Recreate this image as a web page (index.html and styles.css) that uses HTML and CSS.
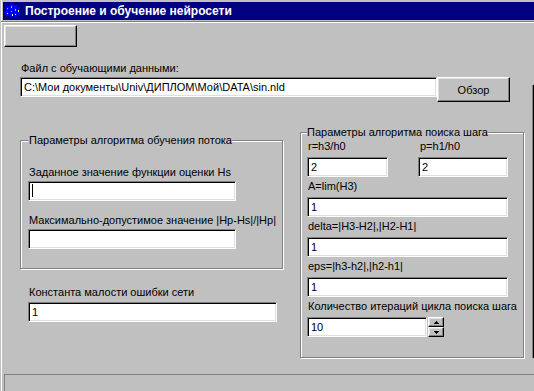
FILE: index.html
```html
<!DOCTYPE html>
<html lang="ru">
<head>
  <meta charset="UTF-8">
  <title>Построение и обучение нейросети</title>
  <link rel="stylesheet" href="styles.css">
</head>
<body>

  <div class="window">
    <div class="titlebar">
      <svg class="app-icon" width="16" height="16" viewBox="0 0 16 16">
        <rect x="1" y="3" width="3" height="10" fill="#0000ff"/>
        <rect x="5" y="1" width="3" height="13" fill="#0000ff"/>
        <rect x="9" y="2" width="3" height="12" fill="#0000ff"/>
        <rect x="13" y="4" width="2" height="8" fill="#0000ff"/>
        <rect x="2" y="5" width="1" height="1" fill="#00ffff"/>
        <rect x="6" y="3" width="1" height="2" fill="#00ffff"/>
        <rect x="10" y="6" width="1" height="2" fill="#00ffff"/>
        <rect x="6" y="8" width="1" height="1" fill="#00ffff"/>
        <rect x="2" y="10" width="1" height="1" fill="#ffff00"/>
        <rect x="10" y="11" width="1" height="1" fill="#ffff00"/>
        <rect x="13" y="7" width="1" height="2" fill="#ffff00"/>
        <rect x="7" y="11" width="1" height="2" fill="#ffffff"/>
      </svg>
      <span class="title">Построение и обучение нейросети</span>
    </div>
    <div class="menu-line"></div>

    <div class="toolbar">
      <button class="btn tool-btn"></button>
    </div>

    <div class="main">
      <div class="form">
        <div class="label file-label">Файл с обучающими данными:</div>
        <div class="file-row">
          <div class="edit file-edit">C:\Мои документы\Univ\ДИПЛОМ\Мой\DATA\sin.nld</div>
          <button class="btn browse-btn">Обзор</button>
        </div>

        <div class="columns">
          <div class="left-col">
            <fieldset class="group group-left">
              <legend>Параметры алгоритма обучения потока</legend>
              <div class="field field-hs">
                <div class="label">Заданное значение функции оценки Hs</div>
                <div class="edit edit-left"><span class="caret"></span></div>
              </div>
              <div class="field field-max">
                <div class="label">Максимально-допустимое значение |Hp-Hs|/|Hp|</div>
                <div class="edit edit-left"></div>
              </div>
            </fieldset>

            <div class="field field-const">
              <div class="label">Константа малости ошибки сети</div>
              <div class="edit edit-const">1</div>
            </div>
          </div>

          <fieldset class="group group-right">
            <legend>Параметры алгоритма поиска шага</legend>
            <div class="field pair">
              <div class="pair-col first">
                <div class="label">r=h3/h0</div>
                <div class="edit edit-r">2</div>
              </div>
              <div class="pair-col second">
                <div class="label">p=h1/h0</div>
                <div class="edit edit-p">2</div>
              </div>
            </div>
            <div class="field">
              <div class="label">A=lim(H3)</div>
              <div class="edit edit-right">1</div>
            </div>
            <div class="field">
              <div class="label">delta=|H3-H2|,|H2-H1|</div>
              <div class="edit edit-right">1</div>
            </div>
            <div class="field">
              <div class="label">eps=|h3-h2|,|h2-h1|</div>
              <div class="edit edit-right">1</div>
            </div>
            <div class="field last">
              <div class="label">Количество итераций цикла поиска шага</div>
              <div class="spin-row">
                <div class="edit edit-spin">10</div>
                <div class="spin">
                  <button class="btn spin-btn">
                    <svg width="5" height="3" viewBox="0 0 5 3"><path d="M2 0h1v1h1v1h1v1H0V2h1V1h1z" fill="#000"/></svg>
                  </button>
                  <button class="btn spin-btn">
                    <svg width="5" height="3" viewBox="0 0 5 3"><path d="M0 0h5v1H4v1H3v1H2V2H1V1H0z" fill="#000"/></svg>
                  </button>
                </div>
              </div>
            </div>
          </fieldset>
        </div>
      </div>

      <div class="side"></div>
    </div>

    <div class="statusbar"></div>
  </div>

</body>
</html>
```

FILE: styles.css
```css
* {
  box-sizing: border-box;
  font-family: "Liberation Sans", Arial, sans-serif;
  font-size: 11px;
}

body {
  margin: 0;
  padding: 0;
  overflow: hidden;
  background: #c0c0c0;
}

.window {
  width: 534px;
  height: 391px;
  display: flex;
  flex-direction: column;
  background: #c0c0c0;
  border-left: 1px solid #c0c0c0;
  box-shadow: inset 1px 0 #fff;
  color: #000;
}

.titlebar {
  height: 18px;
  margin: 2px 0 0 2px;
  padding-left: 2px;
  display: flex;
  align-items: center;
  background: #000080;
}

.app-icon {
  display: block;
  margin-right: 4px;
}

.title {
  color: #fff;
  font-weight: bold;
  font-size: 12px;
  line-height: 18px;
}

.menu-line {
  margin-top: 1px;
  border-top: 1px solid #808080;
  border-bottom: 1px solid #fff;
}

.toolbar {
  padding: 2px 0 0 3px;
  height: 24px;
}

/* raised win95 button */
.btn {
  display: block;
  margin: 0;
  padding: 0;
  background: #c0c0c0;
  border: 1px solid;
  border-color: #fff #000 #000 #fff;
  box-shadow: inset -1px -1px #808080, inset 1px 1px #dfdfdf;
  color: #000;
}

.tool-btn {
  width: 73px;
  height: 22px;
}

.main {
  display: flex;
}

.form {
  width: 504px;
  margin-left: 19px;
}

.label {
  line-height: 13px;
  padding-left: 1px;
  white-space: nowrap;
}

.file-label {
  margin-top: 15px;
  margin-bottom: 2px;
}

.file-row {
  display: flex;
  align-items: flex-start;
}

/* sunken win95 edit */
.edit {
  height: 20px;
  padding: 0 3px;
  background: #fff;
  border: 1px solid;
  border-color: #808080 #fff #fff #808080;
  box-shadow: inset 1px 1px #000, inset -1px -1px #dfdfdf;
  line-height: 18px;
  white-space: nowrap;
  overflow: hidden;
}

.file-edit {
  width: 417px;
}

.browse-btn {
  width: 73px;
  height: 25px;
}

.columns {
  display: grid;
  grid-template-columns: 263px 224px;
  column-gap: 17px;
  align-items: start;
}

.left-col {
  margin-top: 32px;
}

.group {
  margin: 0;
  min-width: 0;
  border: 1px solid #808080;
  box-shadow: 1px 1px 0 #fff, inset 1px 1px 0 #fff;
}

.group legend {
  padding: 0;
  line-height: 13px;
  background: #c0c0c0;
}

.group-left {
  padding: 0 0 19px 7px;
}

.group-left legend {
  padding-left: 1px;
}

.group-left .label {
  margin-bottom: 2px;
}

.field-hs {
  margin-top: 19px;
}

.field-max {
  margin-top: 13px;
}

.edit-left {
  width: 208px;
}

.caret {
  display: inline-block;
  width: 1px;
  height: 13px;
  margin-top: 2px;
  vertical-align: top;
  background: #000;
}

.field-const {
  margin-top: 17px;
  margin-left: 8px;
}

.field-const .label {
  margin-bottom: 3px;
}

.edit-const {
  width: 249px;
}

.group-right {
  margin-top: 24px;
  padding: 0 0 20px 6px;
}

.group-right .field {
  margin-bottom: 3px;
}

.group-right .field.last {
  margin-bottom: 0;
}

.group-right .label {
  margin-bottom: 4px;
}

.pair {
  display: flex;
  margin-top: 1px;
}

.pair-col.first {
  width: 111px;
}

.pair-col.second .label {
  padding-left: 2px;
}

.edit-r {
  width: 81px;
}

.edit-p {
  width: 90px;
}

.edit-right {
  width: 201px;
}

.spin-row {
  display: flex;
}

.edit-spin {
  width: 120px;
}

.spin {
  margin-left: 1px;
}

.spin-btn {
  width: 16px;
  height: 10px;
  display: flex;
  align-items: center;
  justify-content: center;
}

.spin-btn svg {
  display: block;
}

.side {
  width: 2px;
  height: 273px;
  margin: 38px 0 0 8px;
  border-left: 1px solid #808080;
  background: #000;
}

.statusbar {
  margin: auto 0 0 3px;
  height: 17px;
  border-top: 1px solid #808080;
  border-left: 1px solid #808080;
}
```
